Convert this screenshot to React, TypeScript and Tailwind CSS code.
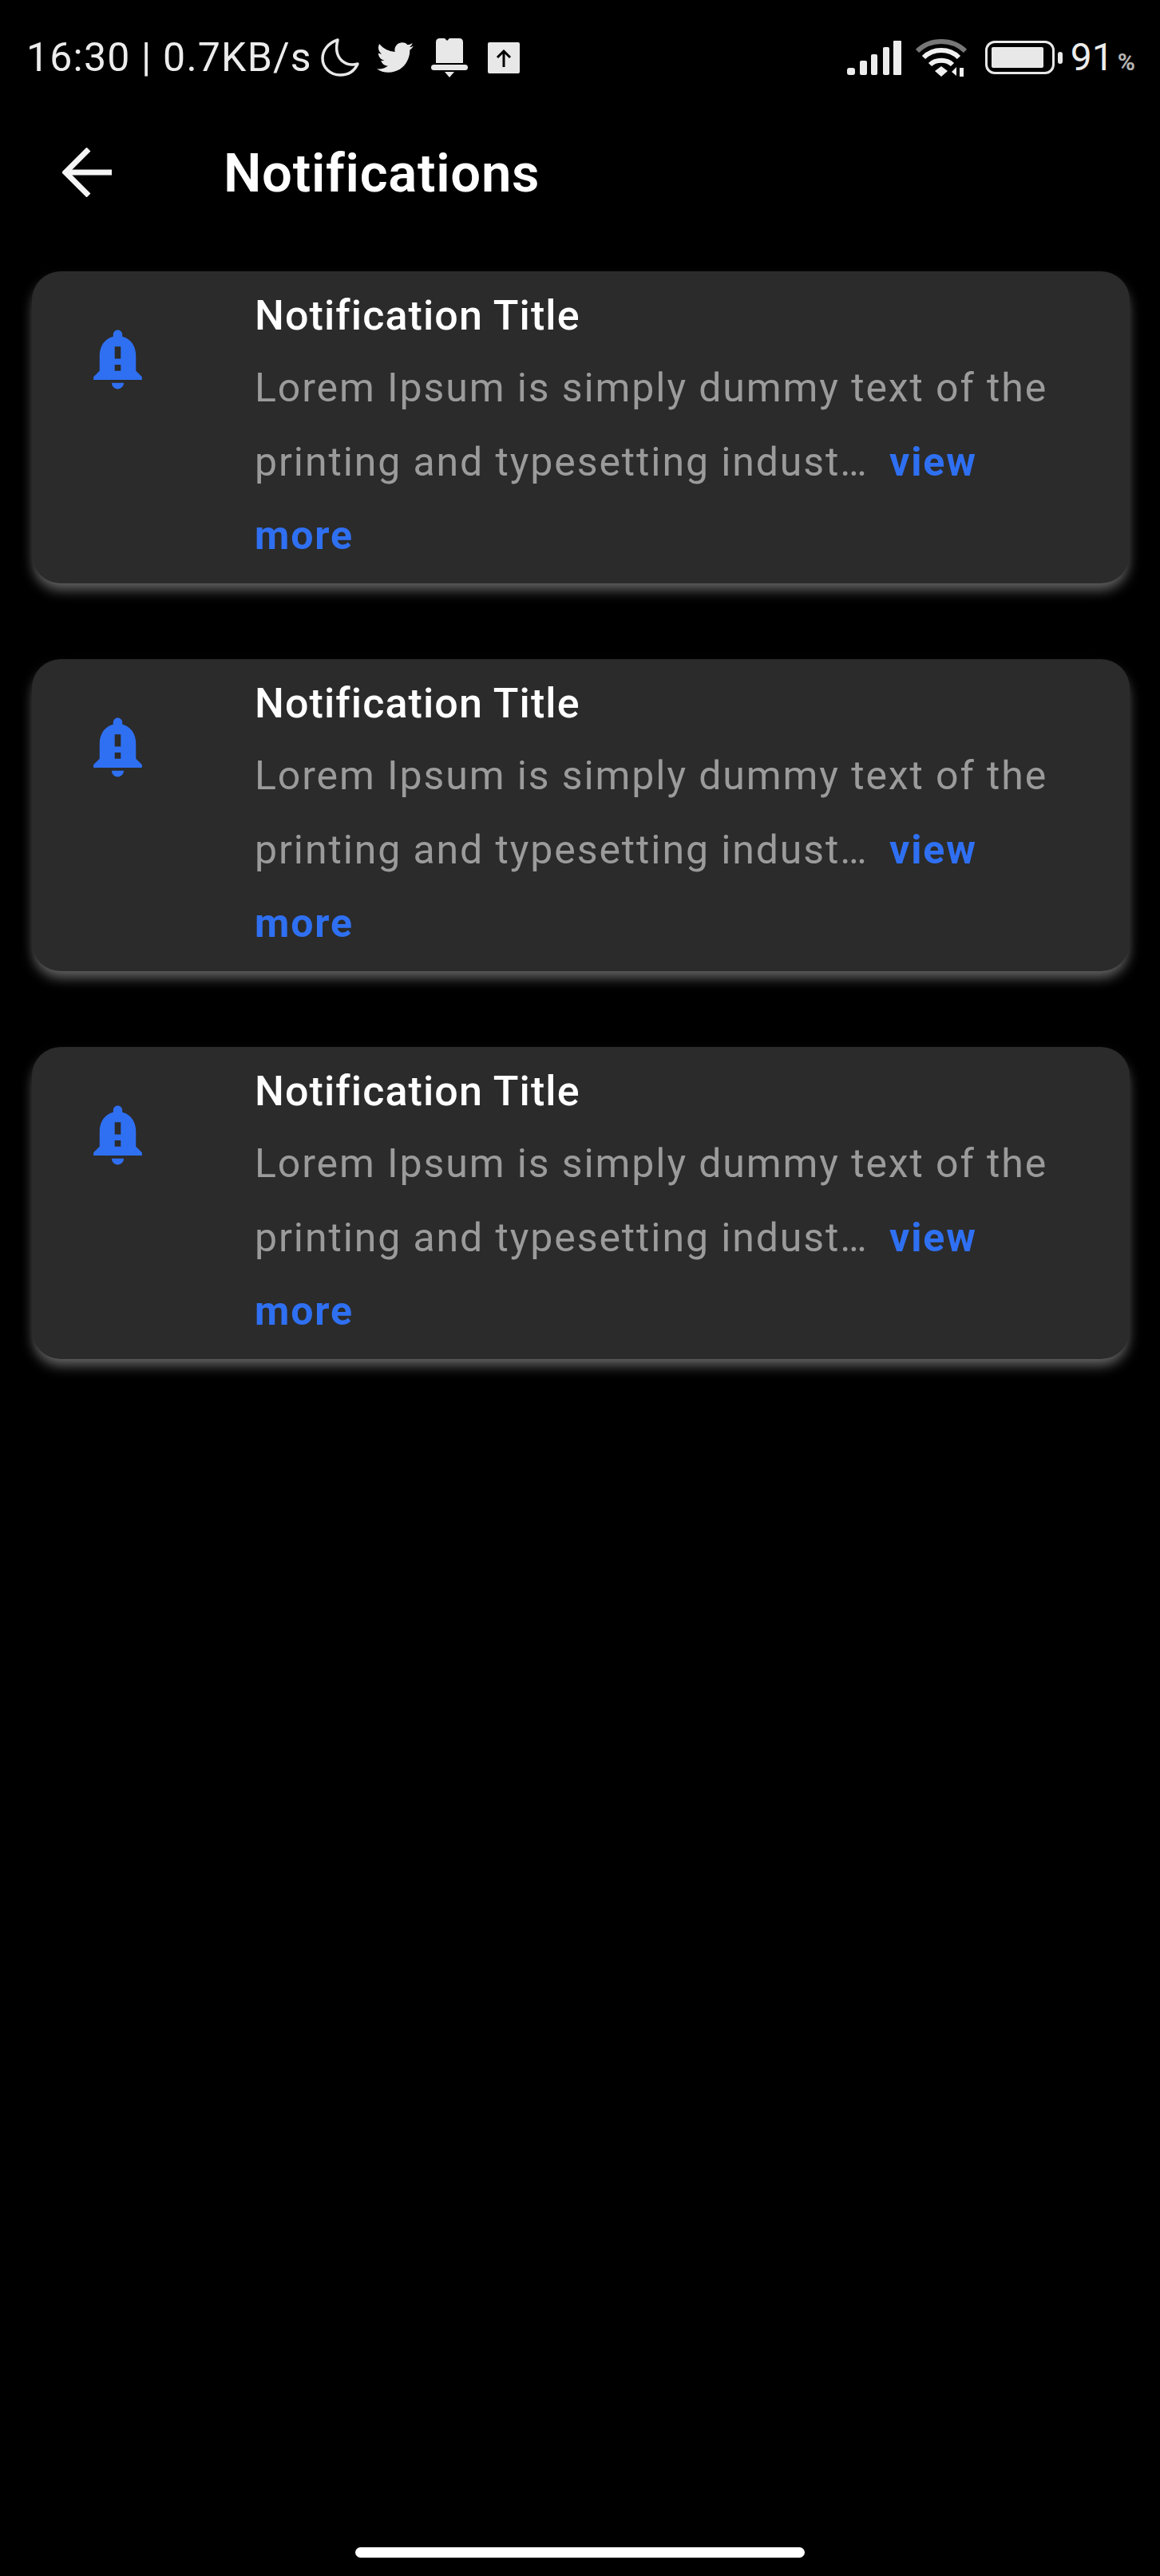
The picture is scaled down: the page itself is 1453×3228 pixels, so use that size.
import { FaTwitter } from 'react-icons/fa';
import { MdNotificationImportant } from 'react-icons/md';

// Status bar glyphs
function MoonIcon() {
  return (
    <svg width="50" height="50" viewBox="0 0 50 50" fill="none" stroke="#e8e8e8" strokeWidth="3.5" strokeLinecap="round" strokeLinejoin="round">
      <path d="M22 3 C10 7 3 16 3 26 C3 38 13 47 25 47 C35 47 43 42 47 33 C32 37 16 27 22 3 Z" />
    </svg>
  );
}

function SilentBell() {
  return (
    <svg width="46" height="50" viewBox="0 0 46 50" fill="#e8e8e8">
      <path d="M6 6 Q6 1 11 1 H17 L20 4 L23 1 H35 Q40 1 40 6 V32 H6 Z" />
      <rect x="0" y="34" width="46" height="7" rx="3.5" />
      <path d="M17 43 H29 L23 50 Z" />
    </svg>
  );
}

function UploadBox() {
  return (
    <svg width="40" height="39" viewBox="0 0 40 39">
      <rect width="40" height="39" rx="2" fill="#e8e8e8" />
      <path d="M20 31 V12 M12 19 L20 11 L28 19" fill="none" stroke="#000" strokeWidth="3" />
    </svg>
  );
}

function SignalBars() {
  return (
    <svg width="68" height="43" viewBox="0 0 68 43" fill="#ececec">
      <rect x="0" y="34" width="10" height="9" rx="3" />
      <rect x="16" y="25" width="9" height="18" rx="2" />
      <rect x="30" y="17" width="8" height="26" rx="2" />
      <rect x="45" y="8" width="8" height="35" rx="2" />
      <rect x="58" y="0" width="10" height="43" rx="1" />
    </svg>
  );
}

function WifiIcon() {
  return (
    <svg width="64" height="50" viewBox="0 0 64 50" fill="none" strokeLinecap="butt">
      <path d="M2 17 C18 1 46 1 62 17" stroke="#777" strokeWidth="6" />
      <path d="M10 25 C22 13 42 13 54 25" stroke="#f0f0f0" strokeWidth="6" />
      <path d="M18 34 C25 27 39 27 46 34" stroke="#f0f0f0" strokeWidth="6" />
      <path d="M24 42 L32 36 L40 42 L32 49 Z" fill="#f0f0f0" />
      <path d="M45 43 L51 37 V48 Z M55 38 H60 V49 H55 Z" fill="#f0f0f0" />
    </svg>
  );
}

function BatteryIcon() {
  return (
    <div className="flex items-center gap-[4px]">
      <div className="w-[87px] h-[42px] rounded-[12px] border-[3px] border-[#e8e8e8] p-[5px]">
        <div className="w-[65px] h-full bg-[#e8e8e8] rounded-[2px]" />
      </div>
      <div className="w-[6px] h-[15px] rounded-full bg-[#e8e8e8]" />
    </div>
  );
}

function BackArrow() {
  return (
    <svg width="62" height="62" viewBox="0 0 62 62" fill="none" stroke="#f5f5f5" strokeWidth="7">
      <path d="M62 31 H6" />
      <path d="M33 2 L4 31 L33 60" />
    </svg>
  );
}

function NotificationCard() {
  return (
    <div className="flex h-[391px] rounded-[36px] bg-[#2b2b2b] shadow-[0_10px_16px_-2px_rgba(255,255,255,0.4)]">
      <div className="w-[279px] shrink-0 pl-[62px] pt-[64px]">
        <MdNotificationImportant className="text-[#2f70f2]" size={91} />
      </div>
      <div className="pt-[26px] pr-[74px] flex-1">
        <h3 className="text-[52px] leading-[60px] font-medium text-white tracking-[1.1px]">Notification Title</h3>
        <p className="mt-[14px] text-[50px] leading-[92.5px] text-[#9b9b9b] tracking-[1.9px]">
          Lorem Ipsum is simply dummy text of the printing and typesetting indust…{' '}
          <span className="ml-[12px] font-bold text-[#2f70f2]">view more</span>
        </p>
      </div>
    </div>
  );
}

export default function App() {
  return (
    <div className="w-[1453px] h-[3228px] bg-black flex flex-col font-['Roboto',sans-serif]">
      {/* Status bar */}
      <div className="h-[144px] shrink-0 flex items-center justify-between pl-[33px] pr-[31px] text-[#ececec]">
        <div className="flex items-center">
          <span className="text-[50px] leading-none tracking-[1.2px]">16:30 | 0.7KB/s</span>
          <div className="ml-[10px] flex items-center">
            <MoonIcon />
            <div className="ml-[21px]">
              <FaTwitter size={46} color="#e8e8e8" />
            </div>
            <div className="ml-[22px]">
              <SilentBell />
            </div>
            <div className="ml-[25px]">
              <UploadBox />
            </div>
          </div>
        </div>
        <div className="flex items-center">
          <SignalBars />
          <div className="ml-[18px]">
            <WifiIcon />
          </div>
          <div className="ml-[23px]">
            <BatteryIcon />
          </div>
          <div className="ml-[10px] flex items-baseline">
            <span className="text-[48px] leading-none">91</span>
            <span className="ml-[5px] text-[30px] leading-none font-bold text-[#b4b4b4]">%</span>
          </div>
        </div>
      </div>

      {/* Header */}
      <div className="h-[144px] shrink-0 flex items-center pl-[78px]">
        <BackArrow />
        <h1 className="ml-[140px] pt-[2px] text-[67px] leading-none font-semibold text-white tracking-[0.7px]">Notifications</h1>
      </div>

      {/* Cards */}
      <div className="mt-[52px] pl-[40px] pr-[38px] flex flex-col gap-[95px]">
        <NotificationCard />
        <NotificationCard />
        <NotificationCard />
      </div>

      {/* Home indicator */}
      <div className="mt-auto mb-[23px] mx-auto w-[563px] h-[13px] rounded-full bg-white" />
    </div>
  );
}
